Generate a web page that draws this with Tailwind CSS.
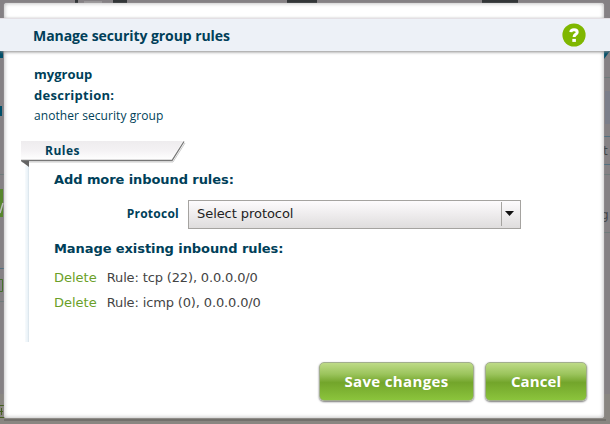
<!DOCTYPE html>
<html lang="en">
<head>
<meta charset="utf-8">
<title>Manage security group rules</title>
<script src="https://cdn.jsdelivr.net/npm/@tailwindcss/browser@4"></script>
</head>
<body class="relative h-[424px] w-[610px] overflow-hidden bg-[#858184] font-['DejaVu_Sans',sans-serif] text-[13px] text-[#444]">
<!-- dimmed page behind the dialog -->
<svg class="absolute inset-0" width="610" height="424" viewBox="0 0 610 424" aria-hidden="true">
  <path fill="#333638" d="M75 0h25v3H75zM113 0h14v3h-14zM287 0h30v3h-30zM482 0h36v3h-36z"/>
  <path fill="#858184" d="M78 0h25v3H78z"/>
  <path fill="#999698" d="M84 1h18v2H84z"/>
  <path fill="#004f69" d="M0 51h3v7H0zM604 51h6l-6 8zM0 106h2v10H0z"/>
  <path fill="#7b7e8a" d="M605 91h5v33h-5z"/>
  <path stroke="#527080" d="M604 136.500h6M604 164.500h6M0 268.500h4" fill="none"/>
  <path stroke="#6f7b7b" d="M604 77.500h6M604 174.500h6M604 232.500h6M0 174.500h4M0 301.500h4" fill="none"/>
  <path fill="#57862d" d="M0 189h3v28H0z"/>
  <path d="M0 213l3-10" stroke="#bbb" stroke-width="1.500"/>
  <path d="M0 279.500h2.500v12H0" fill="none" stroke="#46702d"/>
  <path fill="#898681" d="M0 394h610v30H0z"/>
  <path fill="#73706c" d="M4 419h602v2H4z"/>
  <path d="M0 405.500h4M0 417.500h4M1.500 408v7M0 411.500h3" stroke="#455f20"/>
  <text x="603" y="155" font-size="12" fill="#444">t</text>
  <text x="601" y="219" font-size="12" fill="#444">g</text>
</svg>
<main class="relative flex h-full flex-col">
  <div class="absolute top-[3px] left-[4px] h-[415px] w-[600px] rounded-[3px] bg-white shadow-[inset_0_0_4px_#aaa,0_0_1px_#ccc]"></div>
  <header class="relative mt-[18px] flex h-[33px] shrink-0 items-center justify-between border-t border-[#e3dfe4] bg-[#edf1f7] pr-6 pl-[33px] shadow-[0_1px_3px_#888]">
    <h1 class="font-['Open_Sans',sans-serif] text-[14px] font-bold tracking-[-0.07px] whitespace-nowrap text-[#003f59]">Manage security group rules</h1>
    <svg width="24" height="24" viewBox="0 0 24 24" aria-label="Help"><circle cx="12" cy="12" r="11.600" fill="#7fb700"/><path d="M8.800 9.200C9 7.400 10.200 6.800 12 6.800c2 0 3.200.9 3.200 2.400 0 2.300-3.100 2-3.100 4.700" fill="none" stroke="#fff" stroke-width="3"/><path fill="#fff" d="M10.300 15.900h3.600v3h-3.600z"/></svg>
  </header>
  <section class="relative pt-[13px] pl-[34px] font-['Open_Sans',sans-serif] text-[13px] leading-[21px] text-[#003f59]">
    <h2 class="font-bold">mygroup</h2>
    <h3 class="font-bold tracking-[0.27px]">description:</h3>
    <p class="text-[12px] leading-[19px] tracking-[0.07px] text-[#003f59]">another security group</p>
  </section>
  <section class="relative mt-[15px] ml-[20px] w-[520px]">
    <div class="relative h-[26px]">
      <svg class="absolute top-0 left-0" width="170" height="30" viewBox="0 0 170 30" aria-hidden="true">
        <defs><linearGradient id="tab" x2="0" y2="1"><stop stop-color="#eeecee"/><stop offset=".5" stop-color="#f4f2f4"/><stop offset="1" stop-color="#fff"/></linearGradient></defs>
        <path d="M1 1h162l-12 19H1z" fill="url(#tab)"/><path d="M1 20.500h151l12-19" fill="none" stroke="#777" stroke-width="1.300"/><path d="M2 22h151l12-19" fill="none" stroke="#ccc"/><path d="M1 21h8v6z" fill="#646464"/>
      </svg>
      <h3 class="relative pl-[25px] font-['Open_Sans',sans-serif] text-[12px] leading-[21px] font-bold tracking-[0.5px] text-[#003f59]">Rules</h3>
    </div>
    <div class="ml-[5px] h-[176px] bg-[linear-gradient(90deg,#f8fbfd_0px,#e8f1f7_3px,#d3dde4_4px,#fff_4px)] pl-[29px]">
      <h3 class="pt-[5px] leading-[18px] font-bold tracking-[-0.08px] text-[#003f59]">Add more inbound rules:</h3>
      <div class="mt-[10px] flex h-[30px] items-center">
        <label class="w-[134px] pr-[9px] text-right font-['Open_Sans',sans-serif] text-[12px] font-bold tracking-[0.25px] text-[#003f59]">Protocol</label>
        <div class="flex h-[29px] w-[333px] items-center border border-[#a5a3a0] bg-linear-to-b from-[#fdfbfd] to-[#dfdddd] pl-2 text-[#222]">
          <span class="tracking-[-0.06px]">Select protocol</span>
          <div class="ml-auto flex h-6 w-[19px] items-center justify-center border-l border-[#a5a3a0] pr-1"><svg class="-mt-0.5" width="9" height="5" viewBox="0 0 9 5"><path fill="#111" d="M0 0h9L4.500 5z"/></svg></div>
        </div>
      </div>
      <h3 class="mt-[11px] leading-[18px] font-bold tracking-[-0.08px] text-[#003f59]">Manage existing inbound rules:</h3>
      <ul class="mt-[7px] leading-[25px]">
        <li class="flex gap-[10px]"><a class="text-[#6a9f28]">Delete</a><span class="tracking-[-0.14px]">Rule: tcp (22), 0.0.0.0/0</span></li>
        <li class="flex gap-[10px]"><a class="text-[#6a9f28]">Delete</a><span class="tracking-[-0.14px]">Rule: icmp (0), 0.0.0.0/0</span></li>
      </ul>
    </div>
  </section>
  <footer class="absolute top-[362px] right-[23px] flex gap-[11px] font-['Open_Sans',sans-serif] text-[15px] font-bold text-white">
    <button class="h-[39px] w-[155px] rounded-[5px] border border-[#a2ae8e] bg-[linear-gradient(#bedb87,#9bc45c_30%,#73a52b_53%,#8bc43c)] tracking-[0.35px] shadow-[0_1px_2px_#777]">Save changes</button>
    <button class="h-[39px] w-[102px] rounded-[5px] border border-[#a2ae8e] bg-[linear-gradient(#bedb87,#9bc45c_30%,#73a52b_53%,#8bc43c)] tracking-[0.1px] shadow-[0_1px_2px_#777]">Cancel</button>
  </footer>
</main>
</body>
</html>
